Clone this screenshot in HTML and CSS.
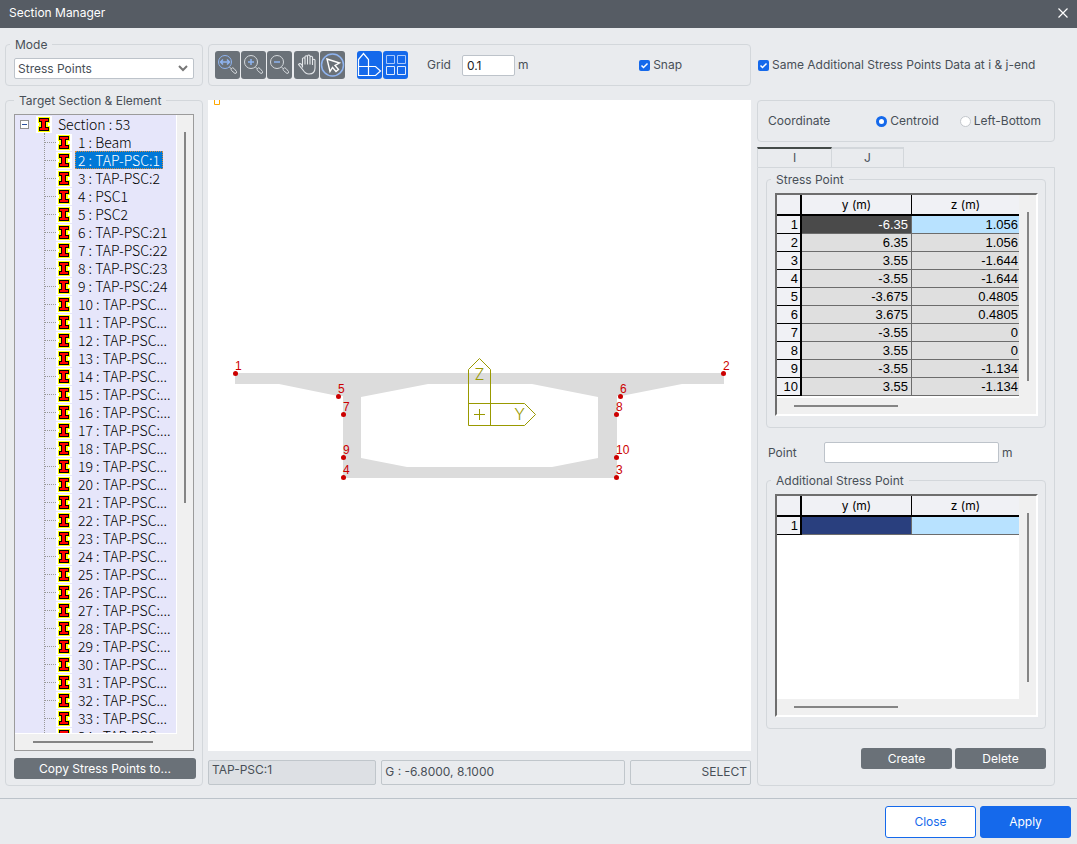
FILE: index.html
```html
<!DOCTYPE html>
<html lang="en">
<head>
<meta charset="utf-8">
<title>Section Manager</title>
<link rel="stylesheet" href="styles.css">
</head>
<body>
<svg class="defs" aria-hidden="true">
  <symbol id="beam" viewBox="0 0 16 17">
    <path fill="#fff" d="M0 0h16v17H0z"/>
    <path fill="#ff0" d="M2 1h12v6h-2v3h2v6H2v-6h1V7H2z"/>
    <path fill="#000" d="M3 2h10v4h-3v5h3v4H3v-4h2V6H3z"/>
    <path fill="#f00" d="M4 3h8v2H9v7h3v2H4v-2h2V5H4z"/>
  </symbol>
</svg>

<header class="titlebar">
  <h1>Section Manager</h1>
  <button class="close-x" aria-label="Close window"><svg width="10" height="10" viewBox="0 0 10 10"><path d="M.5.5l9 9M9.500.5l-9 9" stroke="#fff" stroke-width="1.200"/></svg></button>
</header>

<main class="main">
  <section class="col left">
    <fieldset class="group mode">
      <legend>Mode</legend>
      <select class="select" aria-label="Mode"><option>Stress Points</option></select>
    </fieldset>
    <fieldset class="group target">
      <legend>Target Section &amp; Element</legend>
      <div class="tree-box">
        <div class="tree">
          <div class="root"><button class="expander" aria-label="Collapse"></button><svg class="beam"><use href="#beam"/></svg><span>Section : 53</span></div>
          <ul>
            <li><svg class="beam"><use href="#beam"/></svg><span>1 : Beam</span></li>
            <li class="selected"><svg class="beam"><use href="#beam"/></svg><span>2 : TAP-PSC:1</span></li>
            <li><svg class="beam"><use href="#beam"/></svg><span>3 : TAP-PSC:2</span></li>
            <li><svg class="beam"><use href="#beam"/></svg><span>4 : PSC1</span></li>
            <li><svg class="beam"><use href="#beam"/></svg><span>5 : PSC2</span></li>
            <li><svg class="beam"><use href="#beam"/></svg><span>6 : TAP-PSC:21</span></li>
            <li><svg class="beam"><use href="#beam"/></svg><span>7 : TAP-PSC:22</span></li>
            <li><svg class="beam"><use href="#beam"/></svg><span>8 : TAP-PSC:23</span></li>
            <li><svg class="beam"><use href="#beam"/></svg><span>9 : TAP-PSC:24</span></li>
            <li><svg class="beam"><use href="#beam"/></svg><span>10 : TAP-PSC...</span></li>
            <li><svg class="beam"><use href="#beam"/></svg><span>11 : TAP-PSC...</span></li>
            <li><svg class="beam"><use href="#beam"/></svg><span>12 : TAP-PSC...</span></li>
            <li><svg class="beam"><use href="#beam"/></svg><span>13 : TAP-PSC...</span></li>
            <li><svg class="beam"><use href="#beam"/></svg><span>14 : TAP-PSC...</span></li>
            <li><svg class="beam"><use href="#beam"/></svg><span>15 : TAP-PSC:...</span></li>
            <li><svg class="beam"><use href="#beam"/></svg><span>16 : TAP-PSC:...</span></li>
            <li><svg class="beam"><use href="#beam"/></svg><span>17 : TAP-PSC:...</span></li>
            <li><svg class="beam"><use href="#beam"/></svg><span>18 : TAP-PSC...</span></li>
            <li><svg class="beam"><use href="#beam"/></svg><span>19 : TAP-PSC...</span></li>
            <li><svg class="beam"><use href="#beam"/></svg><span>20 : TAP-PSC...</span></li>
            <li><svg class="beam"><use href="#beam"/></svg><span>21 : TAP-PSC...</span></li>
            <li><svg class="beam"><use href="#beam"/></svg><span>22 : TAP-PSC...</span></li>
            <li><svg class="beam"><use href="#beam"/></svg><span>23 : TAP-PSC...</span></li>
            <li><svg class="beam"><use href="#beam"/></svg><span>24 : TAP-PSC...</span></li>
            <li><svg class="beam"><use href="#beam"/></svg><span>25 : TAP-PSC...</span></li>
            <li><svg class="beam"><use href="#beam"/></svg><span>26 : TAP-PSC...</span></li>
            <li><svg class="beam"><use href="#beam"/></svg><span>27 : TAP-PSC:...</span></li>
            <li><svg class="beam"><use href="#beam"/></svg><span>28 : TAP-PSC:...</span></li>
            <li><svg class="beam"><use href="#beam"/></svg><span>29 : TAP-PSC:...</span></li>
            <li><svg class="beam"><use href="#beam"/></svg><span>30 : TAP-PSC...</span></li>
            <li><svg class="beam"><use href="#beam"/></svg><span>31 : TAP-PSC...</span></li>
            <li><svg class="beam"><use href="#beam"/></svg><span>32 : TAP-PSC...</span></li>
            <li><svg class="beam"><use href="#beam"/></svg><span>33 : TAP-PSC...</span></li>
            <li><svg class="beam"><use href="#beam"/></svg><span>34 : TAP-PSC...</span></li>
          </ul>
        </div>
        <div class="track-v"><i></i></div>
        <div class="track-h"><i></i></div>
      </div>
      <button class="btn">Copy Stress Points to...</button>
    </fieldset>
  </section>

  <section class="col center">
    <div class="group toolbar">
      <div class="tools">
        <button class="tool" aria-label="Zoom fit"><svg viewBox="0 0 25 28"><g fill="none" stroke="#8fb4f0"><circle cx="10" cy="11" r="6.500"/><path stroke-width="1.500" d="M5.500 11h9M8 8.500L5.500 11 8 13.500M12 8.500l2.500 2.500-2.500 2.500"/></g><path fill="none" stroke="#d5d9dd" d="M14.500 16l2 2M16.500 17.500q1-1.500 2.500 0l2.500 3q.5 2-1.500 2l-3.500-3q-.8-1 0-2z"/></svg></button>
        <button class="tool" aria-label="Zoom in"><svg viewBox="0 0 25 28"><g fill="none" stroke="#d5d9dd"><circle cx="10" cy="11" r="6.500"/><path d="M14.500 16l2 2M16.500 17.500q1-1.500 2.500 0l2.500 3q.5 2-1.500 2l-3.500-3q-.8-1 0-2z"/></g><path stroke="#8fb4f0" stroke-width="1.500" d="M7 11h6M10 8v6"/></svg></button>
        <button class="tool" aria-label="Zoom out"><svg viewBox="0 0 25 28"><g fill="none" stroke="#d5d9dd"><circle cx="10" cy="11" r="6.500"/><path d="M14.500 16l2 2M16.500 17.500q1-1.500 2.500 0l2.500 3q.5 2-1.500 2l-3.500-3q-.8-1 0-2z"/></g><path stroke="#8fb4f0" stroke-width="1.500" d="M7 11h6"/></svg></button>
        <button class="tool pan" aria-label="Pan"><svg viewBox="0 0 25 28"><path fill="none" stroke="#e4e7ea" stroke-width="1.100" d="M8.500 16.500V7.500q1.300-1.500 2.500 0v6V5.500q1.300-1.500 2.500 0v8V4.800q1.300-1.500 2.500 0v8.700V6q1.300-1.500 2.500 0v8V9q1.400-1.500 2.500 0v8c0 4-2 6-6 6-3.500 0-4.500-1.500-6-4l-4.500-5.500q1.500-2 3.500.5z"/></svg></button>
        <button class="tool" aria-label="Select"><svg viewBox="0 0 25 28"><circle cx="12.500" cy="14" r="11" fill="none" stroke="#8fb4f0" stroke-width="1.500"/><path fill="none" stroke="#fff" stroke-width="1.400" d="M7 8l12.500 4-4.500 2.500 3.500 4-2.500 2-3.500-4-2.500 4z"/></svg></button>
        <button class="tool on axis" aria-label="Show axes"><svg viewBox="0 0 25 28"><path fill="none" stroke="#fff" stroke-width="1.200" d="M1.500 24.500V8.500l5-6 5 6v16M1.500 15.500h17l5 4.500-5 4.500H1.500z"/></svg></button>
        <button class="tool on" aria-label="Show grid"><svg viewBox="0 0 25 28"><path fill="none" stroke="#a9c8fb" d="M3.500 4.500h8v8h-8zM14.500 4.500h8v8h-8z"/><path fill="none" stroke="#e0ebfd" d="M3.500 15.500h8v8h-8zM14.500 15.500h8v8h-8z"/></svg></button>
      </div>
      <label for="grid">Grid</label>
      <input id="grid" class="text grid-input" type="text" value="0.1">
      <span>m</span>
      <label class="check snap"><input type="checkbox" checked>Snap</label>
    </div>
    <div class="canvas">
      <svg viewBox="208 100 543 651" role="img" aria-label="Box girder cross section">
        <path d="M214.500 100v4.500h5V100" fill="none" stroke="#ffa800"/>
        <path fill="#dcdcdc" fill-rule="evenodd" d="M235 373H724V384H682L621 396H617V478H343V396H338L279 384H235zM361 397V458L407 467H552L598 458V397L532 384H428z"/>
        <g fill="none" stroke="#990">
          <path d="M468.500 425.500V369.500l11-11 11 11V425.500"/>
          <path d="M468.500 403.500H524.500l11 11-11 11H468.500"/>
          <path d="M474 414.500h11M479.500 409v11"/>
        </g>
        <text class="axis-name" x="479.500" y="380">Z</text>
        <text class="axis-name" x="519.500" y="420">Y</text>
        <g fill="#c00">
          <circle cx="235.500" cy="373.500" r="2.500"/><circle cx="723.500" cy="373.500" r="2.500"/>
          <circle cx="338.500" cy="396.500" r="2.500"/><circle cx="620.500" cy="396.500" r="2.500"/>
          <circle cx="343.500" cy="414.500" r="2.500"/><circle cx="616.500" cy="414.500" r="2.500"/>
          <circle cx="343.500" cy="457.500" r="2.500"/><circle cx="616.500" cy="457.500" r="2.500"/>
          <circle cx="343.500" cy="477.500" r="2.500"/><circle cx="616.500" cy="477.500" r="2.500"/>
        </g>
        <g class="point-names">
          <text x="235" y="370">1</text><text x="723" y="370">2</text>
          <text x="338" y="393">5</text><text x="620" y="393">6</text>
          <text x="343" y="411">7</text><text x="616" y="411">8</text>
          <text x="343" y="454">9</text><text x="616" y="454">10</text>
          <text x="343" y="474">4</text><text x="616" y="474">3</text>
        </g>
      </svg>
    </div>
    <div class="status">
      <output class="cell name">TAP-PSC:1</output>
      <output class="cell coords">G : -6.8000, 8.1000</output>
      <output class="cell action">SELECT</output>
    </div>
  </section>

  <section class="col right">
    <label class="check same"><input type="checkbox" checked>Same Additional Stress Points Data at i &amp; j-end</label>
    <div class="group coordinate">
      <span class="coord-label">Coordinate</span>
      <label class="radio"><input type="radio" name="coord" checked>Centroid</label>
      <label class="radio"><input type="radio" name="coord">Left-Bottom</label>
    </div>
    <div class="tabs"><button class="tab active">I</button><button class="tab">J</button></div>
    <div class="panel">
      <fieldset class="group points">
        <legend>Stress Point</legend>
        <div class="sheet">
          <div class="sheet-view">
            <table>
              <thead><tr><th class="num"></th><th class="y">y (m)</th><th>z (m)</th></tr></thead>
              <tbody>
                <tr><th>1</th><td class="dark">-6.35</td><td class="light">1.056</td></tr>
                <tr><th>2</th><td>6.35</td><td>1.056</td></tr>
                <tr><th>3</th><td>3.55</td><td>-1.644</td></tr>
                <tr><th>4</th><td>-3.55</td><td>-1.644</td></tr>
                <tr><th>5</th><td>-3.675</td><td>0.4805</td></tr>
                <tr><th>6</th><td>3.675</td><td>0.4805</td></tr>
                <tr><th>7</th><td>-3.55</td><td>0</td></tr>
                <tr><th>8</th><td>3.55</td><td>0</td></tr>
                <tr><th>9</th><td>-3.55</td><td>-1.134</td></tr>
                <tr><th>10</th><td>3.55</td><td>-1.134</td></tr>
              </tbody>
            </table>
          </div>
          <div class="track-v"><i></i></div>
          <div class="track-h"><i></i></div>
        </div>
      </fieldset>
      <div class="point-row">
        <label for="point">Point</label>
        <input id="point" class="text" type="text">
        <span>m</span>
      </div>
      <fieldset class="group additional">
        <legend>Additional Stress Point</legend>
        <div class="sheet">
          <div class="sheet-view">
            <table>
              <thead><tr><th class="num"></th><th class="y">y (m)</th><th>z (m)</th></tr></thead>
              <tbody><tr><th>1</th><td class="navy"></td><td class="light"></td></tr></tbody>
            </table>
          </div>
          <div class="track-v"><i></i></div>
          <div class="track-h"><i></i></div>
        </div>
      </fieldset>
      <div class="actions"><button class="btn">Create</button><button class="btn">Delete</button></div>
    </div>
  </section>
</main>

<footer class="footer">
  <button class="big">Close</button>
  <button class="big primary">Apply</button>
</footer>
</body>
</html>
```
FILE: styles.css
```css
* { box-sizing: border-box; }

body {
  margin: 0;
  height: 100vh;
  min-height: 640px;
  display: flex;
  flex-direction: column;
  background: #e9ebee;
  color: #484f57;
  font: 12px/16px Inter, "Liberation Sans", sans-serif;
}

button, input, select { font: inherit; color: inherit; margin: 0; }
button { border: 0; padding: 0; }
svg { display: block; }
.defs { width: 0; height: 0; position: absolute; }

.titlebar {
  flex: none;
  height: 28px;
  padding: 0 9px 2px;
  display: flex;
  align-items: center;
  justify-content: space-between;
  background: #565c64;
  color: #fff;
}
.titlebar h1 { margin: 0; font-size: 12px; font-weight: 400; }
.close-x { background: none; }

.main {
  flex: 1;
  min-height: 0;
  display: grid;
  grid-template-columns: 198px minmax(0, 1fr) 299px;
  column-gap: 5px;
  padding: 16px 22px 12px 5px;
}
.col { display: flex; flex-direction: column; min-width: 0; min-height: 0; }

.group {
  min-width: 0;
  margin: 0;
  border: 1px solid #d3d7db;
  border-radius: 4px;
}
legend { height: 1px; line-height: 1px; padding: 0 5px; }

.text, .select {
  height: 21px;
  border: 1px solid #bdc3ca;
  border-radius: 2px;
  background: #fff;
  outline: 0;
}
.text { padding: 0 4px; color: #222; }

/* left column */
.mode { height: 42px; padding: 13px 8px 0; }
.mode legend { margin-left: -4px; }
.select {
  display: block;
  width: 180px;
  padding: 0 3px;
  appearance: none;
  background: #fff url("data:image/svg+xml,%3Csvg xmlns='http://www.w3.org/2000/svg' width='10' height='7'%3E%3Cpath d='M1 1l4 4 4-4' fill='none' stroke='%23777' stroke-width='2'/%3E%3C/svg%3E") no-repeat right 5px center;
}
.target {
  flex: 1;
  min-height: 0;
  margin-top: 14px;
  padding: 13px 6px 6px 8px;
  display: flex;
  flex-direction: column;
  gap: 7px;
}
.tree-box {
  flex: 1;
  min-height: 0;
  margin-right: 2px;
  border: 1px solid #9b9b9b;
  background: #f0f0f0;
  display: grid;
  grid-template: minmax(0, 1fr) 16px / minmax(0, 1fr) 16px;
}
.tree {
  overflow: hidden;
  border: solid #fff;
  border-width: 0 1px 1px 0;
  background: #e6e6fa;
  color: #000;
  font: 300 14px/18px "Noto Sans CJK KR", sans-serif;
  white-space: nowrap;
}
.tree ul { margin: 0 0 0 29px; padding: 0; list-style: none; border-left: 1px dotted #999; }
.root, .tree li { display: flex; align-items: center; height: 18px; }
.tree li::before { content: ""; width: 11px; border-top: 1px dotted #999; }
.root { padding-left: 5px; }
.beam { width: 16px; height: 17px; flex: none; }
.root .beam { margin-left: 7px; }
.tree span { height: 18px; padding: 0 3px; margin-left: 3px; }
.selected span { background: #0078d7; color: #fff; outline: 1px dotted #d98a3a; outline-offset: -1px; }
.expander { width: 9px; height: 9px; border: 1px solid #919191; background: linear-gradient(#2b4f9e, #2b4f9e) center / 5px 1px no-repeat #fff; }

.track-v, .track-h { background: #f0f0f0; display: flex; }
.track-v { justify-content: center; }
.track-v i { width: 2px; background: #858585; margin-top: 17px; }
.track-h i { height: 2px; background: #858585; margin: 7px 0 0 18px; }
.tree-box .track-v i { height: 60%; }
.tree-box .track-h i { width: 120px; }

.btn {
  height: 21px;
  border-radius: 3px;
  background: #6a7178;
  color: #fff;
}

/* center column */
.toolbar { height: 42px; padding: 0 6px; display: flex; align-items: center; }
.tools { display: flex; gap: 1px; margin-right: 19px; }
.tool { width: 25px; height: 28px; border-radius: 3px; background: #6a7178; }
.tool.on { background: #1569eb; }
.tool.pan { margin-left: 1px; }
.tool.axis { margin-left: 11px; }
.grid-input { width: 53px; margin: 0 3px 0 11px; }
.check, .radio { display: flex; align-items: center; gap: 3px; }
.snap { margin-left: auto; margin-right: 62px; }

.check input, .radio input { appearance: none; width: 11px; height: 11px; flex: none; }
.check input {
  border-radius: 2px;
  background: #1569eb url("data:image/svg+xml,%3Csvg xmlns='http://www.w3.org/2000/svg' width='11' height='11'%3E%3Cpath d='M2.500 5.500l2 2 4-4' fill='none' stroke='white' stroke-width='1.500'/%3E%3C/svg%3E");
}
.radio input { border: 1px solid #c3c7cc; border-radius: 50%; background: #fff; }
.radio input:checked { border: 3px solid #1569eb; }

.canvas { flex: 1; min-height: 0; margin-top: 14px; background: #fff; }
.canvas svg { width: 100%; height: 100%; }
.axis-name { font: 300 16px Inter, sans-serif; fill: #990; text-anchor: middle; }
.point-names { font: 12px "Liberation Sans", sans-serif; fill: #c00; }

.status { display: grid; grid-template-columns: 168fr 243fr 121fr; gap: 5px; margin: 9px 0 1px; }
.cell { height: 25px; padding: 3px; border: 1px solid #c0c6cb; border-radius: 2px; }
.name { background: #dde0e4; padding-top: 1px; }
.action { text-align: right; }

/* right column */
.right { padding-left: 1px; }
.same { height: 42px; padding-left: 1px; }
.coordinate { height: 42px; margin-top: 14px; padding: 0 13px 0 10px; display: flex; align-items: center; gap: 21px; }
.coord-label { margin-right: auto; }
.tabs { display: flex; margin-top: 5px; }
.tab { width: 72px; height: 20px; background: none; border: solid #d3d7db; border-width: 2px 1px 0 0; }
.tab.active { width: 75px; border-left-width: 1px; border-top-color: #444a48; }
.panel {
  flex: 1;
  min-height: 0;
  padding: 11px 8px 16px;
  border: 1px solid #d3d7db;
  border-radius: 0 0 4px 4px;
  display: flex;
  flex-direction: column;
}
.points, .additional { padding: 13px 7px 11px 8px; display: flex; flex-direction: column; }
.points legend, .additional legend { margin-left: -4px; }
.additional { flex: 1; min-height: 0; }
.sheet {
  flex: 1;
  min-height: 0;
  border: 2px solid;
  border-color: #6e6e6e #fff #fff #6e6e6e;
  background: #f0f0f0;
  display: grid;
  grid-template: minmax(0, 1fr) 16px / minmax(0, 1fr) 17px;
}
.sheet-view { background: #fff; overflow: hidden; padding-bottom: 2px; }
.sheet .track-v i { height: 169px; }
.sheet .track-h i { width: 104px; margin: 7px 0 0 17px; }
table { width: 100%; border-collapse: separate; border-spacing: 0; table-layout: fixed; color: #000; }
th, td { height: 18px; padding: 0 3px 0 0; font: 13px/17px "Liberation Sans", sans-serif; }
td { text-align: right; background: #dfdfdf; border: solid #6c6c6c; border-width: 0 1px 1px 0; }
td:last-child { border-right: 0; padding-right: 1px; }
th { background: #f0f1f5; }
tbody th { text-align: right; padding-right: 2px; border: solid #000; border-width: 0 2px 1px 0; }
thead th { height: 21px; padding: 0; font: 12px/17px Inter, sans-serif; border: solid #000; border-width: 0 1px 2px 0; }
thead th:last-child { border-right: 0; }
thead .num { width: 25px; border-right-width: 2px; }
thead .y { width: 110px; }
.dark { background: #4a4a4a; color: #fff; }
.light { background: #b8e2ff; }
.navy { background: #293f7e; }

.point-row { display: flex; align-items: center; margin: 14px 0 17px 2px; }
.point-row label { width: 56px; }
.point-row .text { width: 175px; margin-right: 3px; }
.actions { display: flex; justify-content: flex-end; gap: 3px; margin-top: 19px; }
.actions .btn { width: 91px; }

.footer {
  flex: none;
  padding: 7px 6px 6px;
  border-top: 1px solid #bcc3ca;
  display: flex;
  justify-content: flex-end;
  gap: 4px;
}
.big { width: 91px; height: 32px; border: 1px solid #1569eb; border-radius: 3px; background: #fff; color: #1569eb; }
.primary { background: #1569eb; color: #fff; }
```
